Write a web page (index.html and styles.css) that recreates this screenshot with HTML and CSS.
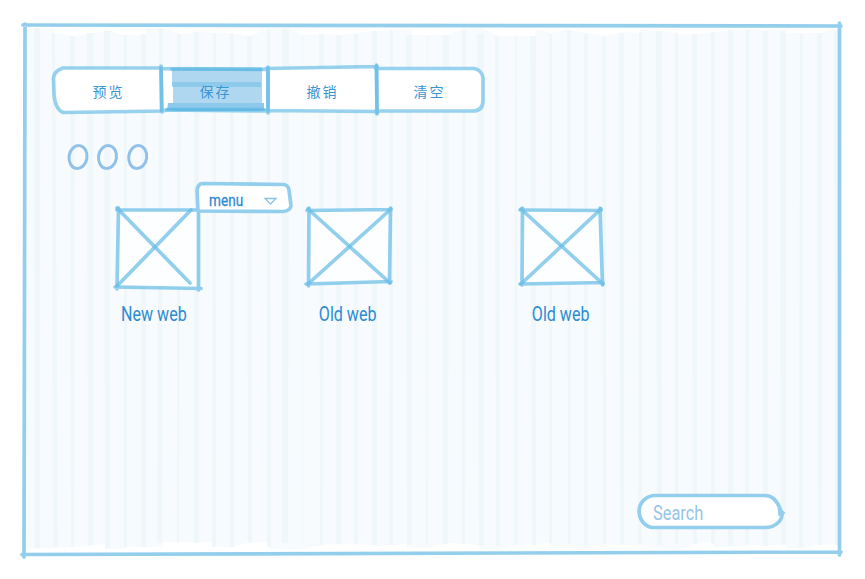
FILE: index.html
```
<!DOCTYPE html>
<html lang="zh">
<head>
<meta charset="utf-8">
<title>Web sketch</title>
<link rel="stylesheet" href="styles.css">
</head>
<body>
<main class="window">
  <svg class="art backdrop" viewBox="0 0 865 579" aria-hidden="true">
    <path class="paper" d="M25 29H55V33L75 36 93 33 110 31 124 35H146V28H163L181 34 199 32 231 33 250 36 269 28H288L302 35 324 34 341 35 375 31 392 30H412V35L449 35 464 28H483L498 36 515 36H535L537 29 551 33 568 29 586 33 602 36 624 32 640 33V30L662 31 678 33V35L696 34 732 30H785V33H820L836 29V545L820 544 803 548H786V544L768 546 750 545 733 547H714V542L696 544 678 549 640 546 606 544 588 548H551V543L517 545 500 549H480V545L449 543 428 548H407V544L377 546 358 543 324 545 303 549H270V542L250 542 232 547H212V542H163V547H126V549H105V544L75 547 25 549Z"/>
    <g class="stripe">
      <path d="M34 28h6V548h-5zM52 33h3l3 514h-5zM70 36h5l-1 511h-3zM87 33h6V545h-5zM104 31h6V548h-5zM124 35h3V547h-3zM141 34h5V547h-5zM159 28h4l-1 515h-5zM177 34h4l-2 509h-2zM194 32h5V543h-5zM213 33h3v514h-4zM230 34h4v513h-4zM247 36h5v507h-4zM267 29h3l1 518h-4zM282 29h7l-1 514h-6zM302 35h1v510h-1zM319 34h5l-1 511h-3zM336 35h5v509h-5zM354 34h4v510h-4zM372 31h5v514h-5zM390 30h3v515h-4zM406 35h6v510h-5zM427 36h1v508h-2zM443 35h6l-1 509h-5zM462 30h4l-1 514h-3zM477 34h7v512h-5zM495 36h4l1 510h-4zM515 36h2l1 509h-4zM530 36h6v509h-4zM549 34h3v510h-3zM567 30h4v514h-3zM584 33h4v512h-4zM602 36h4v508h-3zM619 33h5v511h-4zM639 32h3v512h-4zM656 31h6v514h-5zM675 33h3v511h-3zM692 34h5v510h-4zM711 32h4v512h-4zM728 30h5v515h-5zM746 30h3v515h-4zM763 31h5v515h-5zM780 31h6v514h-5zM800 34h3v513h-4zM817 33h5v512h-4zM834 30h4v515h-3z"/>
    </g>
    <g class="ink">
      <path d="M23 25 841 26M25 24 24 557M839.5 23V555M22 554.5 841 552"/>
    </g>
  </svg>

  <nav class="toolbar">
    <svg class="art" viewBox="0 0 434 50" aria-hidden="true">
      <path class="fill" d="M11 3.5H423Q431 3 431 11V37Q431 46 423 46.5L11 47Q3 43 2 33V12Q3 6 11 3.5Z"/>
      <g class="wash">
        <path d="M120 4H210V37H210V46H212L121 46V22H120Z"/>
        <path class="strong" d="M120 17H209V22H121ZM116 38H212V45H115Z"/>
      </g>
      <g class="ink">
        <path d="M110 3H11Q2 6 1.500 13L2 29Q3 44 11 47.500L112 46M109 1 110 47M109 3.500 216 4.500M110 45 216 46M216 2V48M214 3.500 325 1.500M215 45.500 325 46.500M323.500 3.500 422 3.500Q430 5 431 13V35Q431 46 421 46L323 46M324.500 0 325 49"/>
        <path d="M109 3 109.500 46M120 4H209M115 44.500H212M216 3V46M324.500 1 325 48"/>
      </g>
    </svg>
    <button>预览</button><button>保存</button><button>撤销</button><button>清空</button>
  </nav>

  <svg class="dots" viewBox="0 0 84 28" aria-hidden="true">
    <g><ellipse cx="11" cy="13" rx="9" ry="11.500" transform="rotate(8 11 13)"/><ellipse cx="40.500" cy="13" rx="9" ry="11.500" transform="rotate(8 40.500 13)"/><ellipse cx="70.700" cy="13" rx="9" ry="11.500" transform="rotate(8 70.700 13)"/></g>
  </svg>

  <section class="gallery">
    <figure>
      <svg class="thumb" viewBox="0 0 86 84" aria-hidden="true">
        <path class="pane" d="M3 4H83V82L2 80Z"/>
        <g class="ink"><path d="M2 4H84M3.500 2 2 83M83.500 2V84M0 81 86 82.500"/><path d="M2 2 75 77"/><path d="M2 80 76 4"/></g>
      </svg>
      <figcaption><span class="new">New web</span></figcaption>
      <div class="menu">
        <svg class="art" viewBox="0 0 98 32" aria-hidden="true">
          <path class="fill ink" d="M7 2.500 88 3.500Q93 3.500 94 9L96 25Q95 30 88 30.500L3 30 2 9Q3 3 7 2.500Z"/>
          <path class="arrow" d="M70 17.500H81L75.500 23Z"/>
        </svg>
        <span>menu</span>
      </div>
    </figure>
    <figure>
      <svg class="thumb" viewBox="0 0 86 84" aria-hidden="true">
        <path class="pane" d="M4 4 83 3V76L3 78Z"/>
        <g class="ink"><path d="M1 4.500 85 3.500M3 2 2.500 80M84.500 2 83.500 77M0 78 85 75.500"/><path d="M2 3 84 77"/><path d="M2 78 85 3"/></g>
      </svg>
      <figcaption><span>Old web</span></figcaption>
    </figure>
    <figure>
      <svg class="thumb" viewBox="0 0 86 84" aria-hidden="true">
        <path class="pane" d="M4 4H81L84 77 3 78Z"/>
        <g class="ink"><path d="M1 4 82 4.500M3.500 2 3 79M81 2 83.500 79M1 78 84 76.500"/><path d="M2 3 84 78"/><path d="M2 78 82 3"/></g>
      </svg>
      <figcaption><span>Old web</span></figcaption>
    </figure>
  </section>

  <label class="search">
    <svg class="art" viewBox="0 0 150 38" aria-hidden="true">
      <path class="fill ink" d="M144 19C141 10 136 3.500 128 3.500H17C-3 6 -2 32 15 35.500H128C139 35.500 146 28 145 20"/>
      <path class="nib" d="m141 16 7 5-6 3z"/>
    </svg>
    <span>Search</span>
  </label>
</main>
</body>
</html>
```
FILE: styles.css
```
* { box-sizing: border-box; }
body { margin: 0; background: #fff; font-family: Roboto, "Noto Sans CJK SC", sans-serif; }
.window { position: relative; width: 865px; height: 579px; padding: 65px 0 0; display: flex; flex-direction: column; overflow: hidden; isolation: isolate; }
.art { position: absolute; inset: 0; width: 100%; height: 100%; z-index: -1; overflow: visible; }
.paper { fill: #f7fbfe; }
.stripe { fill: #eff7fa; }
.ink { stroke: #93ceed; }
.ink, .ink path { stroke-width: 3.7; stroke-linejoin: round; stroke-linecap: round; }
g.ink { fill: none; }
.fill { fill: #fff; }
.wash { fill: #afd8f0; }
.wash .strong { fill: #8dc9eb; }

.toolbar { position: relative; isolation: isolate; margin-left: 52px; width: 434px; height: 50px; display: grid; grid-template-columns: repeat(4, 107px); padding-left: 3px; }
.toolbar .ink path { stroke: #5bb6e4; stroke-opacity: .62; }
.toolbar button { border: 0; padding: 2px 0 0; background: none; color: #3a95d3; font: 14px/1 "Noto Sans CJK SC", sans-serif; letter-spacing: 2px; }

.dots { width: 84px; height: 28px; margin: 29px 0 0 67px; fill: none; stroke: #91c1e8; stroke-width: 3; overflow: visible; }

.gallery { display: grid; grid-template-columns: 191px 213px 86px; margin: 34px 0 0 115px; }
figure { position: relative; margin: 0; width: 86px; }
.thumb { display: block; width: 86px; height: 84px; overflow: visible; }
.thumb .ink path { stroke: #64bae5; stroke-opacity: .7; }
.pane { fill: #fdfeff; }
figcaption { display: flex; justify-content: center; margin-top: 12px; color: #2c8bd0; font-size: 21px; line-height: 24px; white-space: nowrap; }
figcaption span { transform: translateX(-1px) scaleX(.765); }
figcaption .new { transform: translateX(-4px) scaleX(.765); }

.menu { position: absolute; isolation: isolate; left: 80px; top: -25px; width: 98px; height: 32px; padding: 10px 0 0 14px; color: #2c8bd0; font-size: 17px; line-height: 18px; }
.menu span { display: inline-block; transform: scaleX(.8); transform-origin: left; -webkit-text-stroke: .3px; }
.arrow { fill: #fff; stroke: #8dc1e7; stroke-width: 1.3; }

.search { position: relative; isolation: isolate; width: 150px; height: 38px; margin: auto 0 49px 637px; padding: 10px 0 0 16px; color: #95c5e9; font-size: 20px; line-height: 22px; }
.search span { display: inline-block; transform: scaleX(.82); transform-origin: left; }
.nib { fill: #93ceed; stroke: #93ceed; stroke-linejoin: round; }
```
